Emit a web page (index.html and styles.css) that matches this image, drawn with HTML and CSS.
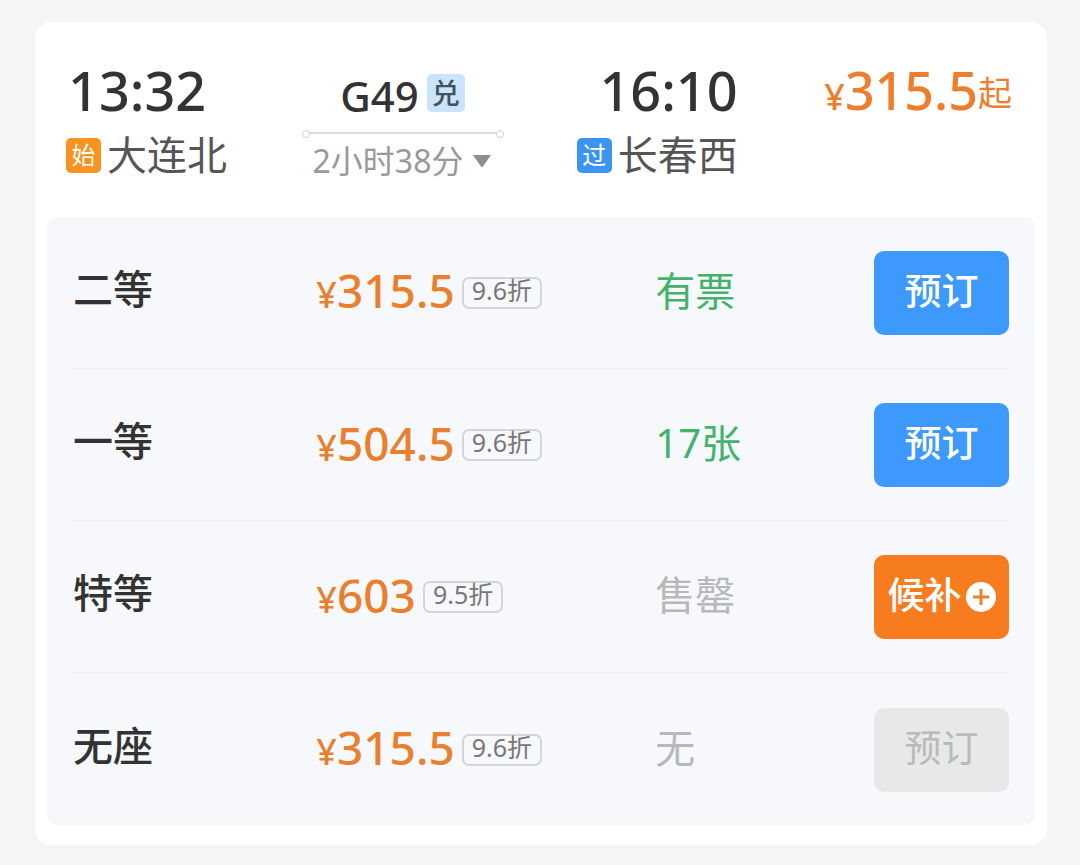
FILE: index.html
```html
<!DOCTYPE html>
<html lang="zh-CN">
<head>
  <meta charset="UTF-8" />
  <meta name="viewport" content="width=device-width, initial-scale=1" />
  <title>G49 大连北 - 长春西</title>
  <link rel="stylesheet" href="styles.css">
</head>
<body>
  <main class="train-card">
    <header class="train-head">
      <div class="stop">
        <div class="time">13:32</div>
        <div class="station"><span class="tag tag-start">始</span>大连北</div>
      </div>

      <div class="trip">
        <div class="train-no">G49<span class="tag tag-redeem">兑</span></div>
        <div class="trip-line"></div>
        <button class="duration" type="button">2小时38分
          <svg class="arrow" viewBox="0 0 20 14" width="20" height="14"><path d="M1 1h18l-8 11.500q-1 1-2 0z" fill="#8e8e8e"/></svg>
        </button>
      </div>

      <div class="stop stop-end">
        <div class="time">16:10</div>
        <div class="station"><span class="tag tag-pass">过</span>长春西</div>
      </div>

      <div class="from-price"><span class="yen">¥</span>315.5<span class="from">起</span></div>
    </header>

    <div class="seats">
      <table class="seat-table">
        <tbody>
          <tr>
            <th class="seat" scope="row">二等</th>
            <td class="fare"><div class="fare-box"><span class="price"><span class="yen">¥</span>315.5</span><span class="discount">9.6折</span></div></td>
            <td class="status available">有票</td>
            <td class="action"><button class="btn btn-book" type="button">预订</button></td>
          </tr>
          <tr>
            <th class="seat" scope="row">一等</th>
            <td class="fare"><div class="fare-box"><span class="price"><span class="yen">¥</span>504.5</span><span class="discount">9.6折</span></div></td>
            <td class="status available">17张</td>
            <td class="action"><button class="btn btn-book" type="button">预订</button></td>
          </tr>
          <tr>
            <th class="seat" scope="row">特等</th>
            <td class="fare"><div class="fare-box"><span class="price"><span class="yen">¥</span>603</span><span class="discount">9.5折</span></div></td>
            <td class="status">售罄</td>
            <td class="action">
              <button class="btn btn-wait" type="button">候补<svg class="plus" viewBox="0 0 30 30" width="30" height="30"><circle cx="15" cy="15" r="15" fill="#fff"/><path d="M15 7v16M7 15h16" stroke="#f0802c" stroke-width="3"/></svg></button>
            </td>
          </tr>
          <tr>
            <th class="seat" scope="row">无座</th>
            <td class="fare"><div class="fare-box"><span class="price"><span class="yen">¥</span>315.5</span><span class="discount">9.6折</span></div></td>
            <td class="status">无</td>
            <td class="action"><button class="btn" type="button" disabled>预订</button></td>
          </tr>
        </tbody>
      </table>
    </div>
  </main>
</body>
</html>
```

FILE: styles.css
```css
* {
  box-sizing: border-box;
}

body {
  margin: 0;
  padding: 22px 33px 19px 35px;
  background: #f5f5f5;
  color: #333;
  font-family: "Noto Sans", "Noto Sans CJK SC", sans-serif;
}

button {
  padding: 0;
  border: none;
  background: none;
  font-family: inherit;
  cursor: pointer;
}

.train-card {
  padding: 36px 12px 20px;
  background: #fff;
  border-radius: 16px;
}

/* departure, train, arrival, lowest price */
.train-head {
  display: grid;
  grid-template-columns: 25% 29% 17% 1fr;
  padding: 0 23px 29px 19px;
}

.time {
  padding-left: 2px;
  font-size: 54px;
  font-weight: 500;
  line-height: 64px;
}

.station {
  display: flex;
  align-items: center;
  gap: 6px;
  padding-top: 4px;
  font-size: 40px;
  line-height: 58px;
  color: #555;
  white-space: nowrap;
}

.stop-end .time {
  text-align: right;
}

.stop-end .station {
  justify-content: flex-end;
}

.tag {
  display: flex;
  flex: none;
  align-items: center;
  justify-content: center;
  width: 35px;
  height: 35px;
  border-radius: 5px;
  font-size: 24px;
  line-height: 32px;
  color: #fff;
}

.tag-start {
  background: #f7931e;
}

.tag-pass {
  background: #3b94f0;
}

.tag-redeem {
  width: 38px;
  height: 38px;
  background: #cbe3fb;
  color: #40535f;
  font-size: 28px;
}

.trip {
  width: 200px;
  padding-top: 10px;
}

.train-no {
  display: flex;
  align-items: center;
  justify-content: center;
  gap: 8px;
  font-size: 42px;
  font-weight: 500;
  line-height: 56px;
}

.train-no .tag {
  margin-bottom: 6px;
}

.trip-line {
  position: relative;
  height: 2px;
  margin: 8px 4px 0;
  background: #dcdcdc;
}

.trip-line::before,
.trip-line::after {
  content: "";
  position: absolute;
  top: -2px;
  width: 6px;
  height: 6px;
  border: 1px solid #d2d2d2;
  border-radius: 50%;
  background: #fff;
}

.trip-line::before {
  left: -5px;
}

.trip-line::after {
  right: -5px;
}

.duration {
  display: flex;
  align-items: center;
  justify-content: center;
  gap: 9px;
  width: 100%;
  color: #999;
  font-size: 32px;
  line-height: 54px;
  white-space: nowrap;
}

.from-price {
  color: #ee7e2c;
  font-size: 52px;
  font-weight: 500;
  line-height: 64px;
  text-align: right;
  white-space: nowrap;
}

.yen {
  font-size: 36px;
}

.from {
  font-size: 34px;
  font-weight: 400;
  line-height: 34px;
  vertical-align: 4px;
}

.seats {
  padding: 0 26px;
  background: #f6f8fc;
  border-radius: 10px;
}

.seat-table {
  width: 100%;
  table-layout: fixed;
  border-collapse: collapse;
}

.seat-table th,
.seat-table td {
  height: 152px;
  padding: 0;
  border-bottom: 2px solid #f0f2f5;
  text-align: left;
  vertical-align: middle;
  white-space: nowrap;
}

.seat-table tr:last-child th,
.seat-table tr:last-child td {
  border-bottom: none;
}

.seat-table .seat {
  width: 26%;
  padding-bottom: 12px;
  font-size: 40px;
  font-weight: 500;
}

.fare {
  width: 36%;
}

.fare-box {
  display: flex;
  align-items: center;
  gap: 7px;
}

.price {
  color: #e8802f;
  font-size: 46px;
  font-weight: 500;
  line-height: 64px;
}

.discount {
  height: 32px;
  padding: 0 8px;
  border: 2px solid #d3d5d9;
  border-radius: 7px;
  color: #777;
  font-size: 25px;
  line-height: 22px;
}

.seat-table .status {
  padding: 0 0 8px 2px;
  color: #b8b8b8;
  font-size: 40px;
}

.seat-table .available {
  color: #43b36b;
}

.seat-table .action {
  width: 135px;
}

.btn {
  display: flex;
  align-items: center;
  justify-content: center;
  width: 100%;
  height: 84px;
  padding-bottom: 8px;
  border-radius: 10px;
  background: #e7e8e8;
  color: #b9baba;
  font-size: 37px;
  font-weight: 400;
}

.btn-book {
  background: #3d99fc;
  color: #fff;
  font-weight: 500;
}

.btn-wait {
  gap: 4px;
  background: #f77c20;
  color: #fff;
  font-weight: 500;
}

.plus {
  margin-top: 8px;
}

.btn:disabled {
  cursor: default;
}
```
